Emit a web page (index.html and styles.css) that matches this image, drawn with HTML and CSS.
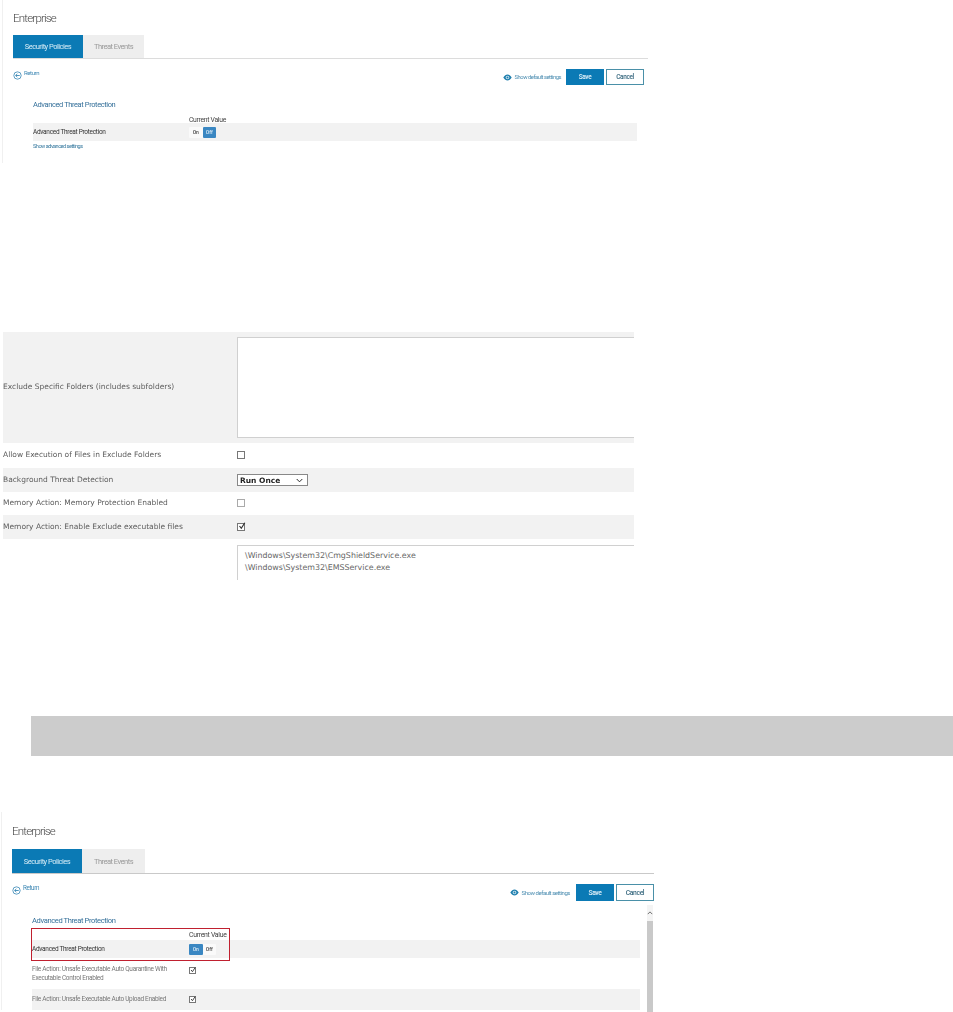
FILE: index.html
```html
<!DOCTYPE html>
<html lang="en">
<head>
<meta charset="utf-8">
<title>Enterprise</title>
<link rel="stylesheet" href="styles.css">
</head>
<body>
<svg class="defs" width="0" height="0" aria-hidden="true">
  <symbol id="back" viewBox="0 0 12 12"><circle cx="6" cy="6" r="4.9" fill="none" stroke="#2b7fb0" stroke-width="1"/><path d="M9 6H3.6M5.8 3.8 3.5 6l2.3 2.2" fill="none" stroke="#2b7fb0" stroke-width="1.1"/></symbol>
  <symbol id="eye" viewBox="0 0 12 9"><path d="M.4 4.5C2 1.7 4 .5 6 .5s4 1.2 5.600 4C10 7.300 8 8.500 6 8.500S2 7.300.4 4.500Z" fill="#1f7fae"/><circle cx="6" cy="4.500" r="2.400" fill="#d7eaf3"/><circle cx="6" cy="4.500" r="1.300" fill="#1f7fae"/></symbol>
  <symbol id="tick" viewBox="0 0 8 8"><path d="M1.500 4 3.300 6.300 6.800.8" fill="none" stroke="#333" stroke-width="1.200"/></symbol>
</svg>

<section class="panel panel-a">
  <h1 class="title">Enterprise</h1>
  <nav class="tabs">
    <a class="tab tab-on">Security Policies</a>
    <a class="tab">Threat Events</a>
  </nav>
  <div class="toolbar">
    <a class="return"><svg class="return-icon"><use href="#back"/></svg><span>Return</span></a>
    <div class="actions">
      <a class="defaults"><svg class="eye"><use href="#eye"/></svg>Show default settings</a>
      <button class="btn btn-save">Save</button>
      <button class="btn btn-cancel">Cancel</button>
    </div>
  </div>
  <div class="policy">
    <h2 class="policy-title">Advanced Threat Protection</h2>
    <div class="col-head">Current Value</div>
    <div class="prow shade">
      <span class="plabel strong">Advanced Threat Protection</span>
      <span class="toggle"><span class="opt">On</span><span class="opt opt-on">Off</span></span>
    </div>
    <a class="more">Show advanced settings</a>
  </div>
</section>

<section class="settings">
  <div class="srow shade srow-tall">
    <span class="slabel">Exclude Specific Folders (includes subfolders)</span>
    <div class="box box-tall"></div>
  </div>
  <div class="srow srow-a"><span class="slabel">Allow Execution of Files in Exclude Folders</span><span class="check"></span></div>
  <div class="srow shade"><span class="slabel">Background Threat Detection</span>
    <span class="select">Run Once<svg class="chev" viewBox="0 0 8 5"><path d="M.8.8 4 4 7.200.8" fill="none" stroke="#222" stroke-width="1.100"/></svg></span>
  </div>
  <div class="srow srow-b"><span class="slabel">Memory Action: Memory Protection Enabled</span><span class="check check-dim"></span></div>
  <div class="srow shade"><span class="slabel">Memory Action: Enable Exclude executable files</span><span class="check"><svg class="tick"><use href="#tick"/></svg></span></div>
  <div class="srow srow-clip">
    <span class="slabel"></span>
    <div class="box box-files">\Windows\System32\CmgShieldService.exe<br>\Windows\System32\EMSService.exe</div>
  </div>
</section>

<div class="banner"></div>

<section class="panel panel-b">
  <h1 class="title">Enterprise</h1>
  <nav class="tabs">
    <a class="tab tab-on">Security Policies</a>
    <a class="tab">Threat Events</a>
  </nav>
  <div class="toolbar">
    <a class="return"><svg class="return-icon"><use href="#back"/></svg><span>Return</span></a>
    <div class="actions">
      <a class="defaults"><svg class="eye"><use href="#eye"/></svg>Show default settings</a>
      <button class="btn btn-save">Save</button>
      <button class="btn btn-cancel">Cancel</button>
    </div>
  </div>
  <div class="scrollarea">
    <div class="policy">
      <h2 class="policy-title">Advanced Threat Protection</h2>
      <div class="col-head">Current Value</div>
      <div class="prow shade">
        <span class="plabel strong">Advanced Threat Protection</span>
        <span class="toggle"><span class="opt opt-on">On</span><span class="opt">Off</span></span>
      </div>
      <div class="prow prow-2">
        <span class="plabel">File Action: Unsafe Executable Auto Quarantine With Executable Control Enabled</span>
        <span class="check check-sm"><svg class="tick"><use href="#tick"/></svg></span>
      </div>
      <div class="prow prow-3 shade">
        <span class="plabel">File Action: Unsafe Executable Auto Upload Enabled</span>
        <span class="check check-sm"><svg class="tick"><use href="#tick"/></svg></span>
      </div>
      <div class="callout"></div>
    </div>
    <div class="scrollbar">
      <svg class="scroll-up" viewBox="0 0 8 5"><path d="M1 4 4 1l3 3" fill="none" stroke="#555" stroke-width="1.100"/></svg>
      <div class="thumb"></div>
    </div>
  </div>
</section>
</body>
</html>
```

FILE: styles.css
```css
html, body {
  margin: 0;
  padding: 0;
  background: #fff;
}
body {
  height: 1012px;
  overflow: hidden;
  font-family: "Roboto", "Liberation Sans", sans-serif;
  color: #333;
}
.defs { display: block; }

.panel {
  border-left: 1px solid #f0f0f0;
  box-sizing: border-box;
  filter: blur(0.4px);
}
.panel-a {
  height: 163px;
  width: 646px;
  margin-left: 2px;
  padding: 10px 0 0 10px;
}
.panel-b {
  width: 653px;
  height: 198px;
  margin-top: 56px;
  margin-left: 1px;
  padding: 9px 0 0 10px;
}

.title {
  margin: 0;
  height: 25px;
  line-height: 17px;
  font-size: 11.500px;
  font-weight: 300;
  letter-spacing: -0.8px;
  color: #444;
}
.panel-b .title { height: 28px; line-height: 21px; }

.tabs {
  display: flex;
  height: 23px;
  border-bottom: 1px solid #dcdcdc;
}
.panel-b .tabs { height: 24px; border-bottom-color: #c9c9c9; }
.tab {
  width: 61px;
  background: #eee;
  color: #999;
  font-size: 7.500px;
  letter-spacing: -0.5px;
  line-height: 24px;
  text-align: center;
}
.tab-on {
  width: 70px;
  background: #0b7ab5;
  color: #d8edf7;
}
.panel-b .tab { width: 63px; line-height: 26px; }
.panel-b .tab-on { width: 70px; }

.toolbar {
  display: flex;
  justify-content: space-between;
  align-items: flex-start;
  height: 36px;
  padding: 10px 4px 0 0;
  box-sizing: border-box;
}
.panel-b .toolbar { height: 31px; padding: 10px 0 0 0; }

.return {
  display: flex;
  align-items: flex-start;
  gap: 2px;
  font-size: 6px;
  letter-spacing: -0.4px;
  line-height: 8px;
  color: #3b86b3;
}
.panel-b .return { font-size: 6.300px; }
.return-icon { width: 9px; height: 9px; margin-top: 2px; }

.actions { display: flex; align-items: center; }
.defaults {
  display: flex;
  align-items: center;
  gap: 3px;
  margin-right: 5px;
  font-size: 5.800px;
  letter-spacing: -0.45px;
  color: #4a8cb0;
}
.panel-b .defaults { margin-right: 6px; font-size: 6px; }
.eye { width: 9px; height: 7px; }

.btn {
  width: 38px;
  height: 16px;
  padding: 0;
  box-sizing: border-box;
  font: 500 6.500px "Roboto", sans-serif;
  letter-spacing: -0.4px;
  border: 0;
}
.panel-b .btn { height: 17px; font-size: 6.800px; }
.btn-save { background: #0b7ab5; color: #e6f3fa; }
.btn-cancel {
  margin-left: 2px;
  background: #fff;
  color: #3a6a80;
  border: 1px solid #4a90a8;
}

.policy {
  position: relative;
  width: 604px;
  margin-left: 20px;
  padding-top: 5px;
}
.panel-b .policy { width: 608px; padding-top: 11px; }
.policy-title {
  margin: 0;
  height: 10px;
  line-height: 10px;
  font-size: 7.500px;
  letter-spacing: -0.4px;
  font-weight: 400;
  color: #35709a;
}
.panel-b .policy-title { font-size: 7.600px; }
.col-head {
  padding-left: 156px;
  height: 7px;
  margin-top: 6px;
  line-height: 9px;
  font-size: 6.800px;
  letter-spacing: -0.3px;
  color: #444;
}
.panel-b .col-head { height: 10px; margin-top: 4px; padding-left: 157px; line-height: 10px; font-size: 6.900px; }

.shade { background: #f2f2f2; }
.prow {
  display: flex;
  align-items: center;
  height: 18px;
}
.plabel {
  width: 156px;
  flex: none;
  font-size: 6.500px;
  letter-spacing: -0.3px;
  line-height: 9px;
  color: #777;
}
.panel-b .plabel { width: 157px; }
.plabel.strong { color: #333; }
.prow-2 { height: 31px; align-items: flex-start; padding-top: 7px; box-sizing: border-box; }
.prow-3 { height: 21px; }
.panel-b .prow-2 .plabel { width: 138px; padding-right: 19px; }

.toggle {
  display: flex;
  width: 27px;
  height: 11px;
  background: #fafafa;
  border-radius: 1px;
  font-size: 5px;
  font-weight: 500;
}
.opt {
  flex: 1;
  text-align: center;
  line-height: 11px;
  color: #444;
}
.opt-on { background: #3a87c2; color: #dcecf7; border-radius: 1px; }

.more {
  display: block;
  margin-top: 1px;
  font-size: 5.600px;
  letter-spacing: -0.5px;
  line-height: 8px;
  color: #35789e;
}

.callout {
  position: absolute;
  left: -1px;
  top: 23px;
  width: 197px;
  height: 31px;
  border: 1px solid #c0202f;
}

.scrollarea { display: flex; }
.scrollbar {
  width: 6px;
  height: 107px;
  margin-left: 7px;
  padding-top: 6px;
  box-sizing: border-box;
  background: #f4f4f4;
}
.scroll-up { display: block; width: 6px; height: 4px; }
.thumb { margin-top: 6px; height: 95px; background: #c9c9c9; }

.settings {
  width: 631px;
  margin: 169px 0 0 3px;
  height: 248px;
  overflow: hidden;
  font-family: "DejaVu Sans", "Open Sans", sans-serif;
  color: #5c5c5c;
  filter: blur(0.35px);
}
.srow {
  display: flex;
  align-items: center;
  height: 24px;
}
.srow-a { height: 25px; }
.srow-b { height: 23px; }
.srow-tall { height: 111px; }
.srow-clip { height: 41px; align-items: flex-start; padding-top: 6px; box-sizing: border-box; }
.slabel {
  width: 234px;
  flex: none;
  padding-bottom: 2px;
  font-size: 7.500px;
}
.box {
  flex: 1;
  box-sizing: border-box;
  background: #fff;
  border: 1px solid #d0d0d0;
  border-right: 0;
}
.box-tall { height: 101px; }
.box-files {
  height: 50px;
  padding: 4px 7px;
  font-size: 7.900px;
  line-height: 12px;
  color: #666;
}
.check {
  display: block;
  width: 6px;
  height: 6px;
  flex: none;
  margin-bottom: 1px;
  background: #fff;
  border: 1px solid #777;
}
.check-dim { border-color: #aaa; }
.check-sm { width: 5px; height: 5px; margin: 2px 0 0; }
.prow-3 .check-sm { margin: 0; }
.tick { display: block; width: 8px; height: 8px; margin: -2px 0 0 0; }
.check-sm .tick { width: 6px; height: 6px; margin: -1px 0 0; }
.select {
  display: flex;
  align-items: center;
  justify-content: space-between;
  box-sizing: border-box;
  width: 71px;
  height: 12px;
  padding: 0 4px 0 2px;
  border: 1px solid #888;
  background: #fff;
  font-size: 7.500px;
  font-weight: 700;
  color: #222;
}
.chev { width: 7px; height: 5px; }

.banner {
  height: 40px;
  margin: 136px 0 0 31px;
  background: #ccc;
}
```
